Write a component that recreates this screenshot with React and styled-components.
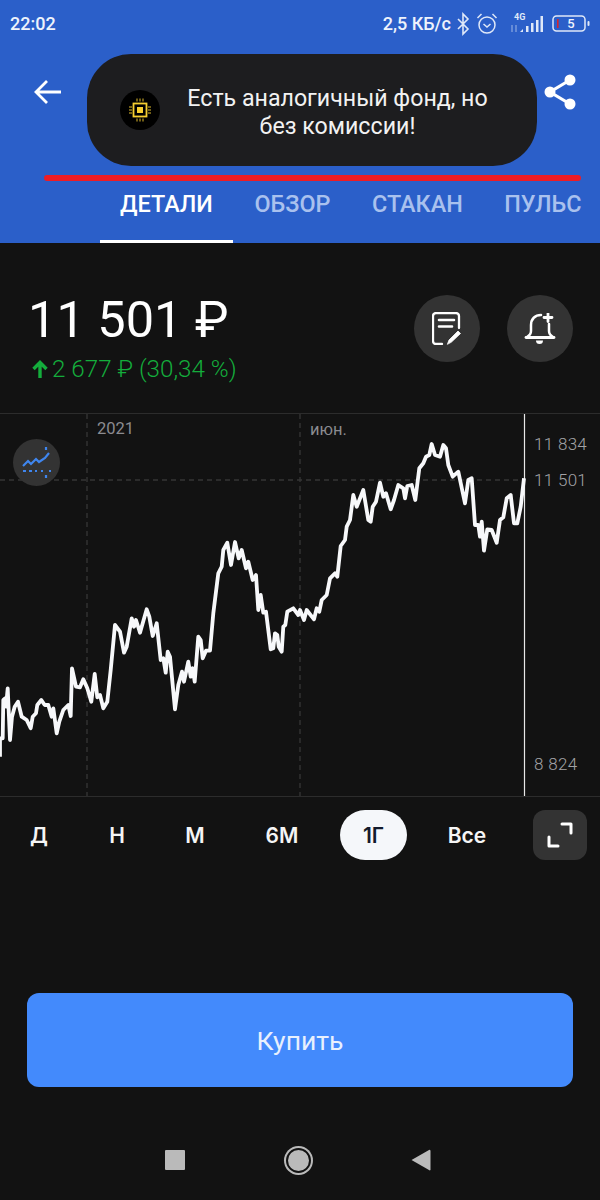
import React from 'react'
import styled, { createGlobalStyle } from 'styled-components'

const GlobalStyle = createGlobalStyle`
  html, body {
    margin: 0;
    padding: 0;
    background: #121212;
  }
`

const Screen = styled.div`
  background: #121212;
  color: #fff;
  display: flex;
  flex-direction: column;
  font-family: Roboto, 'Liberation Sans', sans-serif;
  height: 1200px;
  overflow: hidden;
  position: relative;
  width: 600px;
`

const Head = styled.header`
  background: #2b5fc9;
  display: flex;
  flex-direction: column;
  height: 243px;
  position: relative;
`

const StatusBar = styled.div`
  align-items: center;
  color: #eef3fc;
  display: flex;
  font-size: 18px;
  font-weight: 500;
  height: 47px;
  justify-content: space-between;
  padding: 0 10px;
`

const StatusRight = styled.div`
  align-items: center;
  display: flex;
`

const Speed = styled.span`
  margin-right: 5px;
`

const Toolbar = styled.div`
  align-items: center;
  display: flex;
  height: 90px;
  justify-content: space-between;
  padding: 0 24px 0 33px;
`

const Toast = styled.div`
  align-items: center;
  background: #1d1d1f;
  border-radius: 44px;
  box-sizing: border-box;
  display: flex;
  height: 112px;
  left: 87px;
  padding: 0 46px 0 33px;
  position: absolute;
  top: 54px;
  width: 450px;
`

const ChipBadge = styled.div`
  align-items: center;
  background: #000;
  border-radius: 50%;
  display: flex;
  flex: none;
  height: 40px;
  justify-content: center;
  width: 40px;
`

const ToastText = styled.div`
  color: #f2f2f2;
  flex: 1;
  font-size: 23.2px;
  line-height: 28px;
  margin-left: 24px;
  padding-top: 4px;
  text-align: center;
`

const RedLine = styled.div`
  background: #ee1c25;
  border-radius: 3px;
  height: 6px;
  left: 44px;
  position: absolute;
  top: 175px;
  width: 537px;
`

const Tabs = styled.nav`
  display: flex;
  height: 76px;
  margin-top: auto;
  padding: 0 0 0 100px;
  white-space: nowrap;
`

const Tab = styled.div`
  border-bottom: 3px solid ${(props) => (props.$active ? '#fff' : 'transparent')};
  box-sizing: border-box;
  color: ${(props) => (props.$active ? '#fff' : '#a9c1ee')};
  font-size: 23.4px;
  font-weight: 500;
  line-height: 32px;
  padding: 21px 20px 0;
  margin-right: 1.5px;
`

const PriceRow = styled.section`
  align-items: flex-start;
  box-sizing: border-box;
  display: flex;
  height: 170px;
  justify-content: space-between;
  padding: 52px 27px 0 28px;
`

const Price = styled.div`
  font-size: 50.5px;
  font-weight: 400;
  line-height: 50px;
`

const Change = styled.div`
  align-items: center;
  color: #14ad3c;
  display: flex;
  font-size: 24.2px;
  font-weight: 300;
  gap: 4px;
  line-height: 28px;
  margin: 10px 0 0 4px;
`

const RoundButtons = styled.div`
  display: flex;
  gap: 27px;
`

const RoundButton = styled.div`
  align-items: center;
  background: #333;
  border-radius: 50%;
  display: flex;
  height: 67px;
  justify-content: center;
  width: 66px;
`

const Chart = styled.section`
  border-bottom: 1px solid #2c2c2c;
  border-top: 1px solid #2c2c2c;
  height: 382px;
  position: relative;
`

const ChartSvg = styled.svg`
  display: block;
`

const AxisLabel = styled.span`
  color: #8b8b90;
  font-size: 16.5px;
  font-weight: 400;
  left: ${(props) => props.$x}px;
  line-height: 20px;
  position: absolute;
  top: ${(props) => props.$y}px;
`

const PriceLabel = styled(AxisLabel)`
  color: #a2a2a6;
  font-size: 17px;
  font-weight: 300;
  letter-spacing: 0.3px;
`

const IndicatorButton = styled.div`
  align-items: center;
  background: #333;
  border-radius: 50%;
  display: flex;
  height: 47px;
  justify-content: center;
  left: 13px;
  position: absolute;
  top: 25px;
  width: 47px;
`

const Ranges = styled.div`
  align-items: center;
  display: flex;
  height: 50px;
  margin-top: 13px;
  padding: 0 13px 0 0;
`

const Range = styled.div`
  align-items: center;
  background: ${(props) => (props.$active ? '#f5f7fa' : 'transparent')};
  border-radius: 25px;
  color: ${(props) => (props.$active ? '#121a2c' : '#f5f5f5')};
  display: flex;
  font-family: Inter, 'Liberation Sans', sans-serif;
  font-size: 21px;
  font-weight: 600;
  height: 50px;
  justify-content: center;
  margin-left: ${(props) => (props.$active ? '10px' : '0')};
  width: ${(props) => props.$w}px;
`

const ExpandButton = styled.div`
  align-items: center;
  background: #333;
  border-radius: 12px;
  display: flex;
  height: 50px;
  justify-content: center;
  margin-left: auto;
  width: 54px;
`

const BuyButton = styled.button`
  background: #438afc;
  border: 0;
  border-radius: 12px;
  color: #e8f0fd;
  font-family: Roboto, 'Liberation Sans', sans-serif;
  font-size: 26.5px;
  font-weight: 400;
  height: 94px;
  margin: 133px 27px 0;
  padding: 1px 0 0;
`

const NavBar = styled.div`
  align-items: center;
  display: flex;
  height: 40px;
  justify-content: space-between;
  margin-top: 53px;
  padding: 0 169px 0 165px;
`

const NavSquare = styled.div`
  background: #bababa;
  border-radius: 1px;
  height: 20px;
  width: 20px;
`

const NavCircle = styled.div`
  background: #bababa;
  border: 2px solid #121212;
  border-radius: 50%;
  box-shadow: 0 0 0 2px #bababa;
  height: 21px;
  width: 21px;
`

// traced from the picture, left and right half in their own crops
const leftTrace = [
  [0, 830], [0, 775], [8, 775], [10, 660], [16, 655], [18, 680], [23, 625], [30, 780], [36, 710], [44, 680],
  [54, 665], [65, 710], [80, 720], [92, 745], [98, 710], [108, 700], [112, 675], [124, 660], [134, 675], [145, 675],
  [155, 710], [160, 685], [170, 760], [178, 725], [190, 690], [205, 675], [212, 708], [216, 565], [228, 620],
  [240, 622], [250, 598], [262, 625], [274, 665], [284, 582], [292, 652], [300, 645], [310, 685], [322, 665],
  [332, 570], [345, 435], [360, 455], [372, 518], [380, 500], [395, 415], [402, 440], [408, 420], [420, 458],
  [440, 388], [448, 410], [458, 468], [470, 430], [482, 540], [490, 535], [497, 578], [503, 515], [510, 530],
  [525, 688], [535, 615], [546, 575], [552, 605], [565, 545], [572, 590], [578, 565], [584, 605], [595, 470],
  [602, 480], [608, 535], [618, 512], [630, 512], [640, 400], [655, 280], [665, 260], [670, 210], [682, 188],
  [693, 255], [705, 186], [716, 235], [725, 210], [738, 265], [745, 245], [758, 300], [768, 285], [775, 390],
  [782, 345], [790, 398], [798, 395], [812, 508], [820, 505], [825, 460], [832, 465], [836, 500], [845, 515],
  [850, 440], [856, 435], [862, 395], [880, 385], [895, 405],
]

const rightTrace = [
  [0, 600], [12, 630], [20, 600], [42, 628], [50, 595], [58, 605], [65, 570], [80, 555], [90, 505], [105, 490],
  [112, 500], [122, 408], [135, 390], [140, 350], [150, 330], [160, 255], [170, 290], [190, 240], [205, 330],
  [212, 335], [218, 290], [228, 275], [240, 218], [250, 260], [258, 250], [272, 298], [282, 270], [295, 225],
  [310, 235], [315, 265], [322, 228], [335, 225], [346, 270], [358, 175], [370, 160], [378, 140], [388, 135],
  [395, 102], [405, 135], [420, 140], [430, 105], [438, 115], [445, 165], [458, 200], [475, 185], [495, 280],
  [505, 210], [515, 205], [525, 345], [535, 345], [540, 380], [545, 335], [552, 422], [562, 358], [575, 360],
  [590, 398], [600, 330], [610, 322], [620, 265], [632, 255], [642, 340], [652, 340], [662, 290], [672, 205],
]

const chartTop = 414
const linePoints = [
  ...leftTrace.map(([x, y]) => [x / 3, 480 + y / 3 - chartTop]),
  ...rightTrace.map(([x, y]) => [300 + x / 3, 410 + y / 3 - chartTop]),
]
  .map(([x, y]) => `${x.toFixed(1)},${y.toFixed(1)}`)
  .join(' ')

const ranges = [
  { label: 'Д', w: 78 },
  { label: 'Н', w: 78 },
  { label: 'М', w: 78 },
  { label: '6М', w: 96 },
  { label: '1Г', w: 67, active: true },
  { label: 'Все', w: 120 },
]

function Bluetooth() {
  return (
    <svg width="14" height="24" viewBox="0 0 14 24" fill="none" stroke="#dfe8f8" strokeWidth="1.6">
      <path d="M2 7l10 10-5 5V2l5 5L2 17" />
    </svg>
  )
}

function Alarm() {
  return (
    <svg width="22" height="24" viewBox="0 0 22 24" fill="none" stroke="#dfe8f8" strokeWidth="1.5" style={{ marginLeft: 6 }}>
      <circle cx="11" cy="13" r="8" />
      <path d="M7.500 12l3.500 3 3.500-3M1.500 6l4-4M20.500 6l-4-4" />
    </svg>
  )
}

function Signal() {
  return (
    <svg width="32" height="24" viewBox="0 0 32 24" style={{ marginLeft: 13 }}>
      <text x="3" y="8" fill="#dfe8f8" fontSize="9" fontWeight="700" fontFamily="Roboto, sans-serif">4G</text>
      <path d="M1 13v7M5 13v7" stroke="#9fb8e6" strokeWidth="1" />
      <path d="M9 20l3-3v3z" fill="#dfe8f8" />
      <path d="M15 14h2.500v6H15zM20 11h2.500v9H20zM25 8h2.500v12H25zM29.500 4H32v16h-2.500z" fill="#dfe8f8" />
    </svg>
  )
}

function Battery() {
  return (
    <svg width="38" height="18" viewBox="0 0 38 18" style={{ marginLeft: 9 }}>
      <rect x="1" y="1" width="32" height="15" rx="3.500" fill="none" stroke="#dfe8f8" strokeWidth="1.500" />
      <rect x="5" y="4" width="1.600" height="9" fill="#d3262e" />
      <rect x="35.500" y="6" width="2" height="5" rx="1" fill="#dfe8f8" />
      <text x="19" y="13" textAnchor="middle" fill="#eef3fc" fontSize="13" fontFamily="Roboto, sans-serif">5</text>
    </svg>
  )
}

function BackArrow() {
  return (
    <svg width="28" height="28" viewBox="0 0 28 28" fill="none" stroke="#fff" strokeWidth="2.800">
      <path d="M28 14H3M14 3L3 14l11 11" />
    </svg>
  )
}

function Share() {
  return (
    <svg width="32" height="36" viewBox="0 0 32 36" fill="#fff" stroke="none">
      <circle cx="26" cy="6" r="5.500" />
      <circle cx="6" cy="18" r="5.500" />
      <circle cx="26" cy="30" r="5.500" />
      <path d="M26 6L6 18l20 12" fill="none" stroke="#fff" strokeWidth="3.200" />
    </svg>
  )
}

function Chip() {
  return (
    <svg width="22" height="24" viewBox="0 0 22 24" fill="none" stroke="#f7cf31">
      <rect x="4.500" y="5.500" width="13" height="13" strokeWidth="1.800" />
      <rect x="8" y="9" width="6" height="6" fill="#f7cf31" stroke="none" />
      <path d="M8 0.500v3M11 0.500v3M14 0.500v3M8 20.500v3M11 20.500v3M14 20.500v3M0 9h3M0 12h3M0 15h3M19 9h3M19 12h3M19 15h3" strokeWidth="0.900" />
    </svg>
  )
}

function NoteIcon() {
  return (
    <svg width="30" height="33" viewBox="0 0 30 33" fill="none" stroke="#fff" strokeWidth="2.300" strokeLinecap="round">
      <path d="M10 32H4a3 3 0 0 1-3-3V4a3 3 0 0 1 3-3h20a3 3 0 0 1 3 3v12" />
      <path d="M7 8h15M7 14.500h13" strokeWidth="2.600" />
      <path d="M15.500 32l1.500-4 9-9 2.500 2.500-9 8.500z" fill="#fff" strokeWidth="0.800" />
    </svg>
  )
}

function BellPlus() {
  return (
    <svg width="32" height="32" viewBox="0 0 32 32" fill="none" stroke="#fff" strokeWidth="2.500" strokeLinecap="round">
      <path d="M17 2C11 2 7 6 7 12v6c0 3-1.500 4.500-4 6M25 11v7c0 3 1.500 4.500 4 6" />
      <path d="M2 24.500h28" strokeWidth="2.800" />
      <path d="M24 0.500v8M20 4.500h8" strokeWidth="2.800" />
      <path d="M12 27.500h7a3.500 3.500 0 0 1-7 0z" fill="#fff" stroke="none" />
    </svg>
  )
}

function IndicatorIcon() {
  return (
    <svg width="30" height="34" viewBox="0 0 30 34" fill="none" stroke="#3f86ef" strokeWidth="2.200">
      <path d="M1 20l5-5 3 3 5-5 3 3 6-4 4-5" />
      <path d="M1 25h14M19 25h2M27 25h2M24 1v3M24 29v3" strokeDasharray="3 3" />
    </svg>
  )
}

function Expand() {
  return (
    <svg width="26" height="28" viewBox="0 0 26 28" fill="none" stroke="#fff" strokeWidth="3" strokeLinecap="round" strokeLinejoin="round">
      <path d="M15 3h9v9M2 16v9h9" />
    </svg>
  )
}

function NavBack() {
  return (
    <svg width="20" height="22" viewBox="0 0 20 22" fill="#bababa">
      <path d="M0.500 11L18 1a1 1 0 0 1 1.500 1v19a1 1 0 0 1-1.500 0z" />
    </svg>
  )
}

export default function App() {
  return (
    <Screen>
      <GlobalStyle />
      <Head>
        <StatusBar>
          <span>22:02</span>
          <StatusRight>
            <Speed>2,5 КБ/с</Speed>
            <Bluetooth />
            <Alarm />
            <Signal />
            <Battery />
          </StatusRight>
        </StatusBar>
        <Toolbar>
          <BackArrow />
          <Share />
        </Toolbar>
        <Tabs>
          <Tab $active>ДЕТАЛИ</Tab>
          <Tab>ОБЗОР</Tab>
          <Tab>СТАКАН</Tab>
          <Tab>ПУЛЬС</Tab>
        </Tabs>
        <Toast>
          <ChipBadge>
            <Chip />
          </ChipBadge>
          <ToastText>Есть аналогичный фонд, но без комиссии!</ToastText>
        </Toast>
        <RedLine />
      </Head>
      <PriceRow>
        <div>
          <Price>11 501 ₽</Price>
          <Change>
            <svg width="16" height="18" viewBox="0 0 16 18" fill="none" stroke="#14ad3c" strokeWidth="3.400">
              <path d="M8 18V3M1.500 9L8 2.500 14.500 9" />
            </svg>
            2 677 ₽ (30,34 %)
          </Change>
        </div>
        <RoundButtons>
          <RoundButton>
            <NoteIcon />
          </RoundButton>
          <RoundButton>
            <BellPlus />
          </RoundButton>
        </RoundButtons>
      </PriceRow>
      <Chart>
        <ChartSvg width="600" height="382" viewBox="0 0 600 382">
          <g stroke="#363636" strokeWidth="1.300" strokeDasharray="5 4" fill="none">
            <path d="M87 0V382M300 0V382M0 66H524" />
          </g>
          <path d="M524.500 0V382" stroke="#e8e8e8" strokeWidth="1.200" />
          <polyline points={linePoints} fill="none" stroke="#f7f8fa" strokeWidth="3.800" strokeLinejoin="round" />
        </ChartSvg>
        <AxisLabel $x={97} $y={5}>2021</AxisLabel>
        <AxisLabel $x={310} $y={6}>июн.</AxisLabel>
        <PriceLabel $x={534} $y={20}>11 834</PriceLabel>
        <PriceLabel $x={534} $y={56}>11 501</PriceLabel>
        <PriceLabel $x={534} $y={340}>8 824</PriceLabel>
        <IndicatorButton>
          <IndicatorIcon />
        </IndicatorButton>
      </Chart>
      <Ranges>
        {ranges.map((range) => (
          <Range key={range.label} $w={range.w} $active={range.active}>
            {range.label}
          </Range>
        ))}
        <ExpandButton>
          <Expand />
        </ExpandButton>
      </Ranges>
      <BuyButton>Купить</BuyButton>
      <NavBar>
        <NavSquare />
        <NavCircle />
        <NavBack />
      </NavBar>
    </Screen>
  )
}
